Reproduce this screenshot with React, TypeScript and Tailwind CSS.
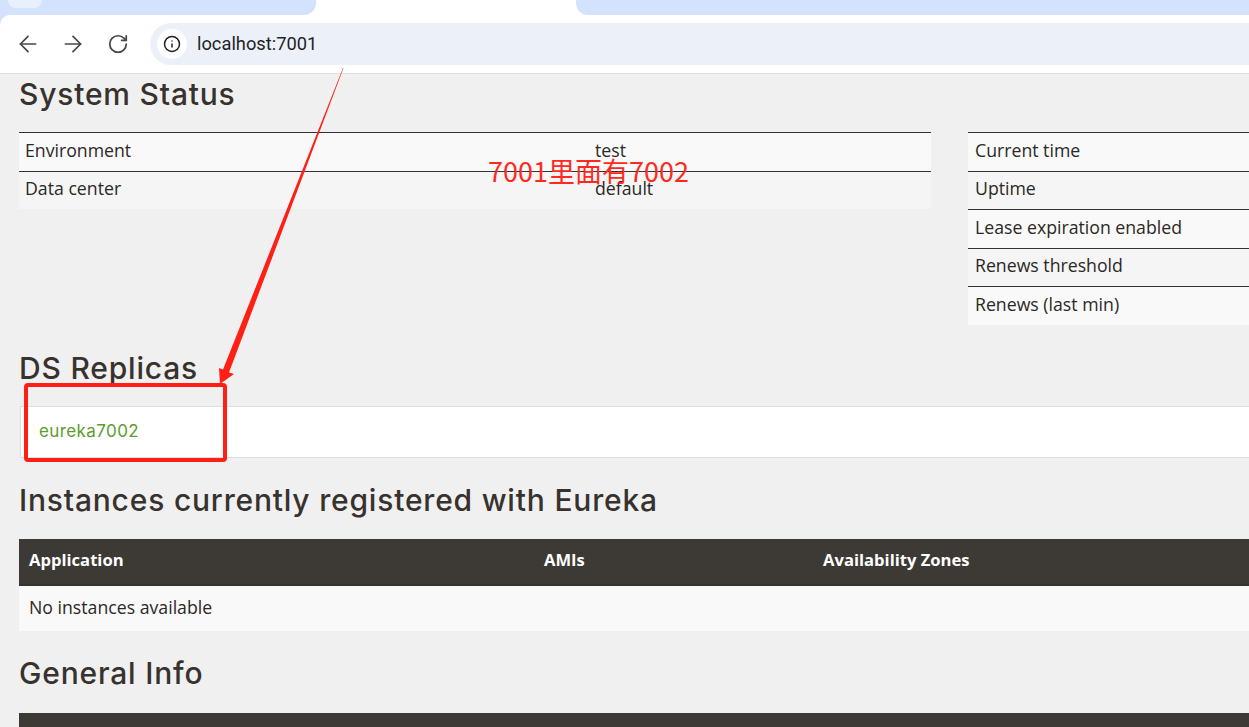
import { ArrowLeft, ArrowRight, RotateCw, Info } from 'lucide-react';

const heading = "text-[30px] leading-[36px] font-medium tracking-[0.8px] text-[#37322d] font-['Inter',sans-serif]";

function StatusTable({ rows, className, inset }: { rows: string[][]; className: string; inset: string }) {
  return (
    <div className={className}>
      {rows.map((row, i) => (
        <div
          key={row[0]}
          className={`flex h-[38.5px] items-center border-t border-[#333] ${inset} ${i % 2 === 0 ? 'bg-[#f9f9f9] pb-[2px]' : 'bg-[#f5f5f5] pb-[3px]'}`}
        >
          <span className="w-[570px] shrink-0">{row[0]}</span>
          {row[1] && <span>{row[1]}</span>}
        </div>
      ))}
    </div>
  );
}

export default function App() {
  return (
    <div className="relative h-[727px] w-[1249px] overflow-hidden bg-[#f0f0f0] font-['Open_Sans',sans-serif] text-[17.7px] text-[#2b2825]">
      {/* tab strip */}
      <div className="flex h-[15px] bg-white">
        <div className="h-full w-[316px] rounded-br-[12px] bg-[#d3e3fd] pl-[8px]">
          <div className="h-[8px] w-[34px] rounded-b-[8px] bg-[#e9f0fd]" />
        </div>
        <div className="w-[260px]" />
        <div className="h-full flex-1 rounded-bl-[12px] bg-[#d3e3fd]" />
      </div>

      {/* toolbar */}
      <div className="bg-[linear-gradient(90deg,#d3e3fd_12px,#ffffff_12px)]">
        <div className="flex h-[59px] items-center rounded-tl-[10px] border-b border-[#dfdfdf] bg-white pb-[1px]">
          <div className="flex items-center pl-[15px] text-[#474747]">
            <ArrowLeft size={26} strokeWidth={1.6} />
            <ArrowRight size={26} strokeWidth={1.6} className="ml-[19px]" />
            <RotateCw size={22} strokeWidth={1.9} className="ml-[21px]" />
          </div>
          <div className="ml-[21px] flex h-[42px] flex-1 items-center rounded-l-full bg-[#ebf0f9] pl-[7px]">
            <div className="flex h-[30px] w-[30px] items-center justify-center rounded-full bg-white">
              <Info size={18} strokeWidth={2} className="text-[#1f1f1f]" />
            </div>
            <span className="ml-[10px] font-['Roboto',sans-serif] text-[18.3px] text-[#1f1f1f]">localhost:7001</span>
          </div>
        </div>
      </div>

      <div className="pl-[19px]">
        <h1 className={`${heading} mt-[2px]`}>System Status</h1>

        <div className="mt-[20px] flex h-[193px] items-start">
          <StatusTable
            className="w-[912px] shrink-0"
            inset="pl-[6px]"
            rows={[
              ['Environment', 'test'],
              ['Data center', 'default'],
            ]}
          />
          <StatusTable
            className="ml-[37px] flex-1"
            inset="pl-[7px]"
            rows={[['Current time'], ['Uptime'], ['Lease expiration enabled'], ['Renews threshold'], ['Renews (last min)']]}
          />
        </div>

        <h1 className={`${heading} mt-[25px]`}>DS Replicas</h1>
        <div className="ml-[1px] mt-[20px] flex h-[52px] items-center border border-r-0 border-[#dddddd] bg-white pl-[18px]">
          <a className="font-['Inter',sans-serif] text-[17px] tracking-[0.4px] text-[#5b9c2f]">eureka7002</a>
        </div>

        <h1 className={`${heading} mt-[24px]`}>Instances currently registered with Eureka</h1>
        <div className="mt-[21px] flex h-[47px] items-center border-b-2 border-[#37322d] bg-[#3d3935] pb-[2px] pl-[10px] text-[16.6px] font-bold text-white">
          <span className="w-[515px]">Application</span>
          <span className="w-[279px]">AMIs</span>
          <span>Availability Zones</span>
        </div>
        <div className="flex h-[45px] items-center bg-[#f9f9f9] pb-[2px] pl-[10px]">No instances available</div>

        <h1 className={`${heading} mt-[24px]`}>General Info</h1>
        <div className="mt-[22px] h-[20px] bg-[#3d3935]" />
      </div>

      {/* screenshot annotations */}
      <div className="absolute left-[488px] top-[154px] font-['Noto_Sans_CJK_SC',sans-serif] text-[27px] leading-[34px] text-[#ff2a1f]">
        7001里面有7002
      </div>
      <div className="absolute left-[24px] top-[383px] h-[79px] w-[203px] rounded-[4px] border-[4px] border-[#ff2015]" />
      <svg className="absolute left-0 top-0" width="1249" height="727" fill="none">
        <polygon points="343,68 343.5,68 229,372.5 234,374 220,384 219,368 223,369.5" fill="#ff2015" />
      </svg>
    </div>
  );
}
